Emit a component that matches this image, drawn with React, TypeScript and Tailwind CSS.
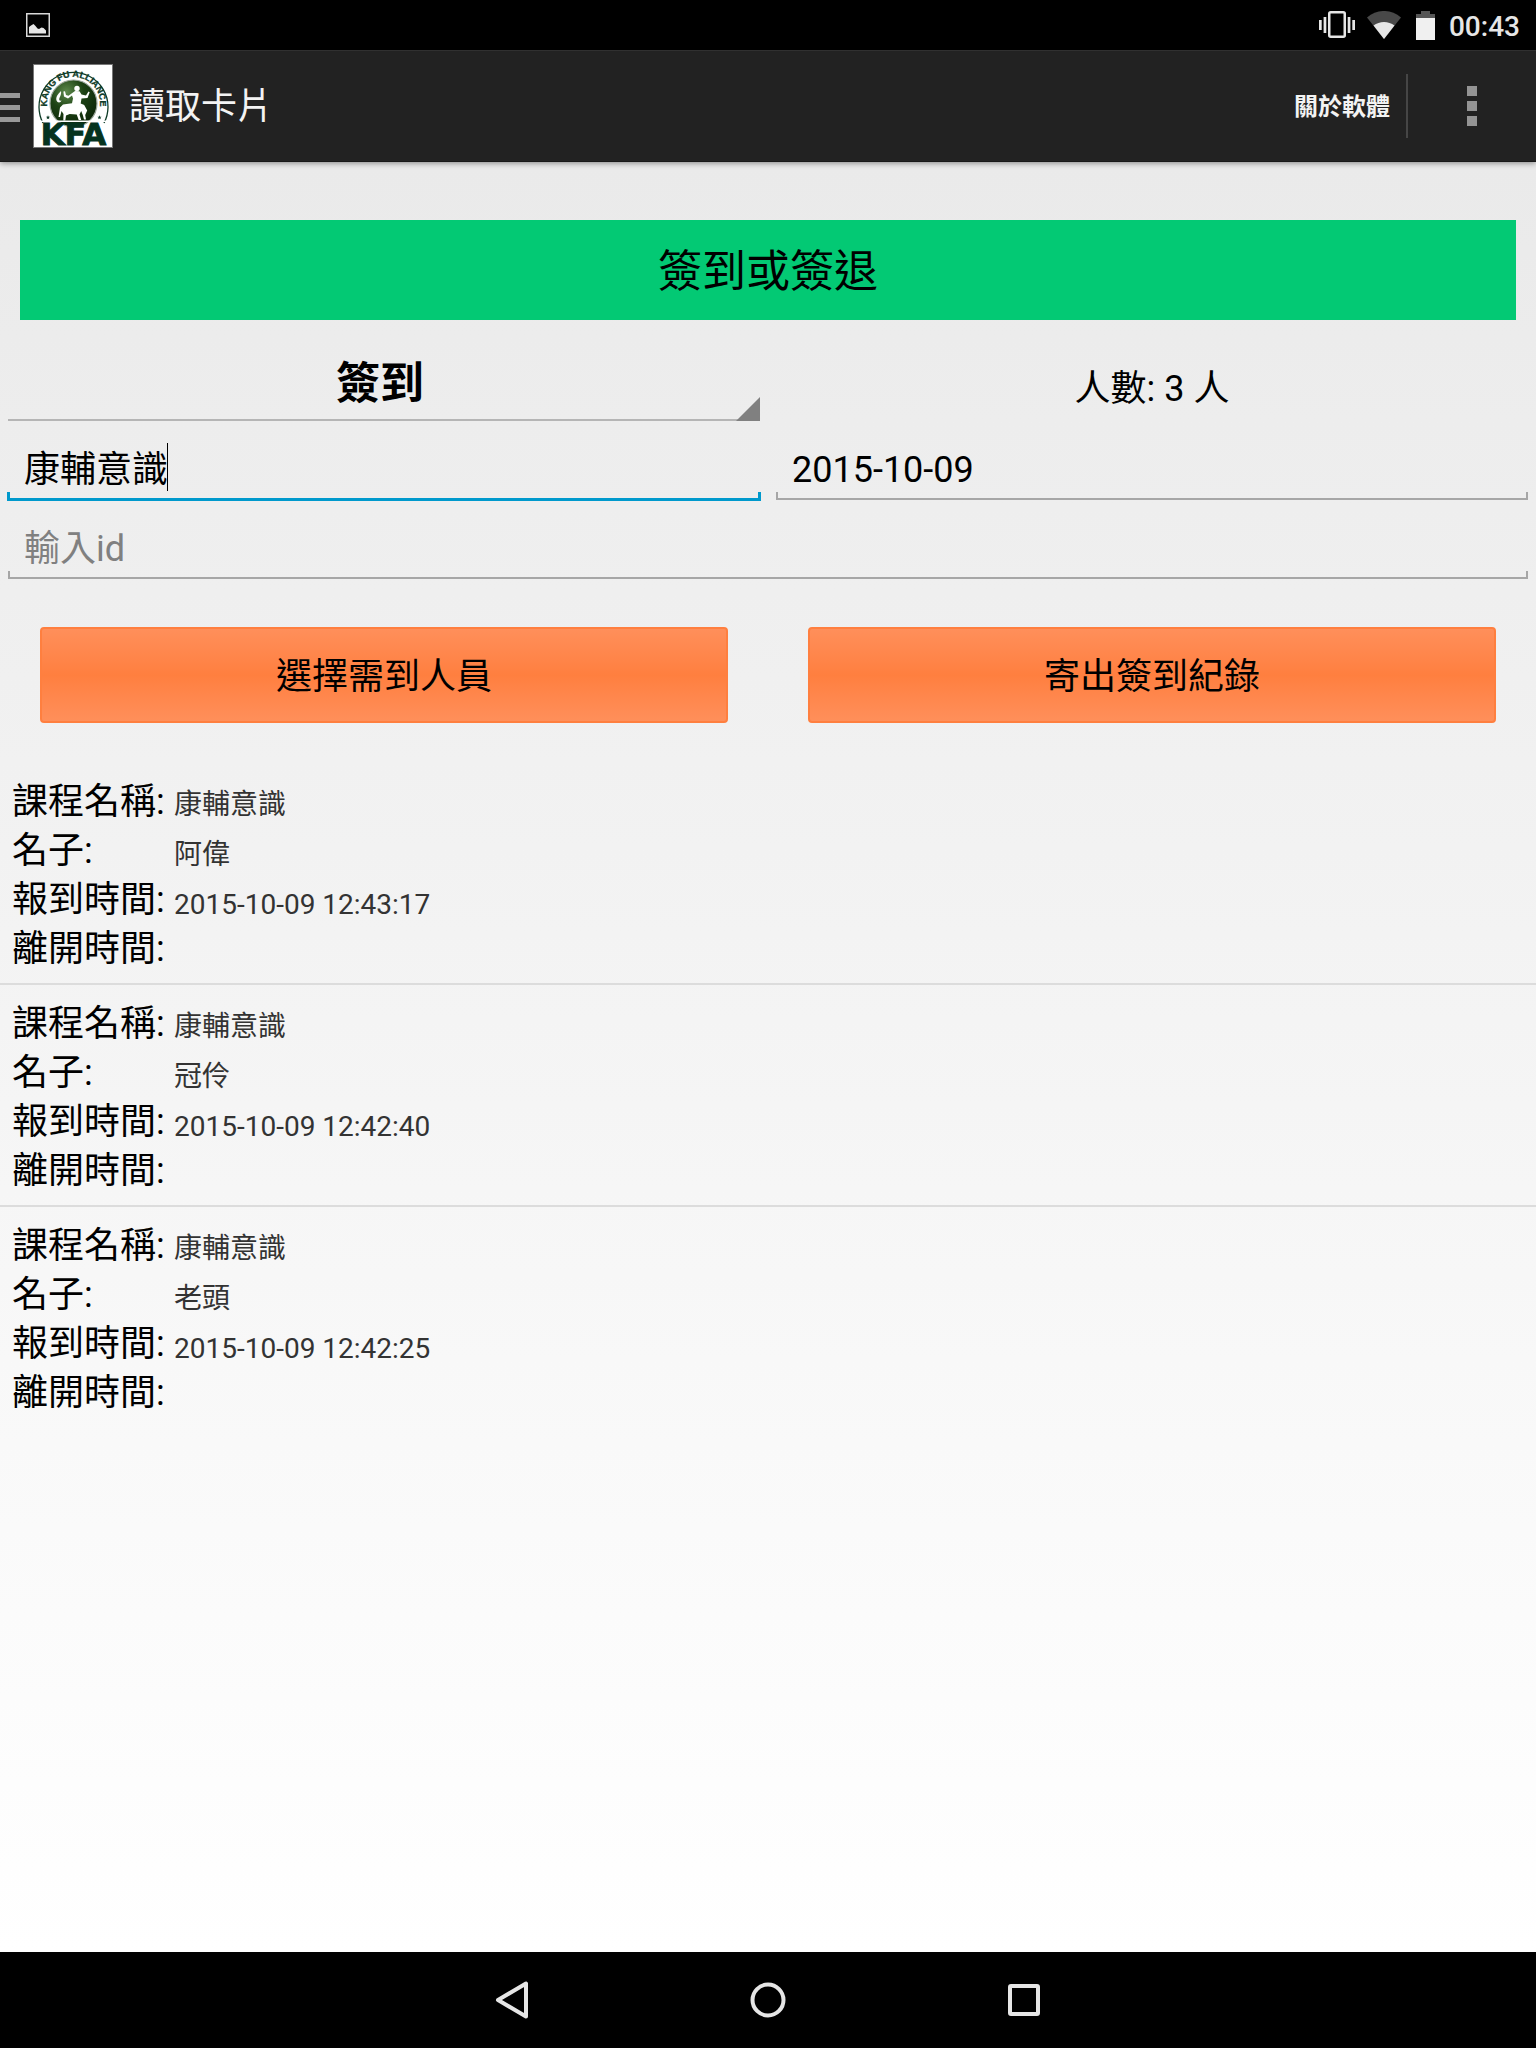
import React, { useState } from "react";

type Attendance = {
  course: string;
  name: string;
  arrived: string;
  left: string;
};

const records: Attendance[] = [
  { course: "康輔意識", name: "阿偉", arrived: "2015-10-09 12:43:17", left: "" },
  { course: "康輔意識", name: "冠伶", arrived: "2015-10-09 12:42:40", left: "" },
  { course: "康輔意識", name: "老頭", arrived: "2015-10-09 12:42:25", left: "" },
];

function StatusBar() {
  return (
    <div className="flex h-[50px] items-center justify-between bg-black pl-[26px] pr-4 text-[#e6e6e6]">
      <svg width="24" height="24" viewBox="0 0 24 24" aria-label="圖片通知">
        <rect x="0.75" y="0.75" width="22.5" height="22.5" fill="none" stroke="#d8d8d8" strokeWidth="1.5" />
        <path d="M3 20.5V14l2-1.500 2.500-1.500 2 2 2 2.500 1.500.5 2.500-1.500 2 .5 2.500 2.500v3z" fill="#e6e6e6" />
      </svg>
      <div className="flex items-center">
        <svg width="36" height="28" viewBox="0 0 36 28" aria-label="震動模式">
          <rect x="10.250" y="1.250" width="15.500" height="24.500" rx="1.500" fill="none" stroke="#e6e6e6" strokeWidth="2.500" />
          <path d="M0 9h2.700v10H0zM4.600 6h2.700v16H4.600zM28.700 6h2.700v16h-2.700zM33.300 9H36v10h-2.700z" fill="#e6e6e6" />
        </svg>
        <svg className="ml-3" width="34" height="28" viewBox="0 0 34 28" aria-label="Wi-Fi">
          <path d="M17 28 0 6.500C10-2.200 24-2.200 34 6.500z" fill="#484848" />
          <path d="M17 28 6.500 14.500c6-4.700 15-4.700 21 0z" fill="#e6e6e6" />
        </svg>
        <svg className="ml-[15px]" width="19" height="29" viewBox="0 0 19 29" aria-label="電池">
          <path d="M5 0h9v3h5v5H0V3h5z" fill="#555555" />
          <path d="M0 7h19v22H0z" fill="#f0f0f0" />
        </svg>
        <span className="ml-[14px] pt-1 text-[28px] leading-8 font-medium">00:43</span>
      </div>
    </div>
  );
}

function Logo() {
  return (
    <svg width="80" height="84" viewBox="0 0 80 84" role="img" aria-label="Kang Fu Alliance" className="overflow-visible">
      <defs>
        <radialGradient id="disc" cx="0.35" cy="0.25" r="0.8">
          <stop offset="0" stopColor="#5d8a4c" />
          <stop offset="0.450" stopColor="#1d4214" />
          <stop offset="1" stopColor="#0c2408" />
        </radialGradient>
        <path id="ring" d="M18.800 54.700A26.500 26.500 0 1 1 62.200 54.700" />
      </defs>
      <rect x="0.500" y="0.500" width="79" height="83" fill="#ffffff" stroke="#777777" strokeWidth="1" />
      <path d="M10 59A34.500 34.500 0 1 1 71 59" fill="none" stroke="#0d3a26" strokeWidth="1.300" />
      <circle cx="40.500" cy="39.500" r="23.500" fill="url(#disc)" stroke="#9aa59a" strokeWidth="1.200" />
      <text fill="#0d3a26" stroke="#0d3a26" strokeWidth="0.300" className="font-[family-name:Liberation_Sans] text-[9px] font-bold">
        <textPath href="#ring" startOffset="50%" textAnchor="middle">KANG FU ALLIANCE</textPath>
      </text>
      <path d="M15 51.300l.6 1.400 1.500.1-1.200 1 .4 1.500-1.300-.8-1.300.8.400-1.500-1.200-1 1.500-.1zM66.500 51.300l.6 1.400 1.500.1-1.200 1 .4 1.500-1.300-.8-1.300.8.4-1.500-1.200-1 1.500-.1z" fill="#0d3a26" />
      <g fill="#ffffff">
        <circle cx="44" cy="24.500" r="2.700" />
        <path d="M42 27l4.500.2 2 3.300 4.500 1 2.500-4 1.200.7-2.200 5.800-6 .5-.8 5 3.500 1.500 3 5.500-2 4.500.8 4.500h-2l-1.200-4.500-1.600-4-1.700 3.500 1.700 5.500h-2.500l-2-5.500-7-.5-3.700 1.500-.7 5h-2l.2-6.500-2-3-1.500 6h-1.500l1.500-9.500 3-3 9-1.200 1-4.800-1-3-4 3-4-2-.6-5 1.600-.3 1 3.700 2.500.8z" />
        <path d="M28 27c-3 3-5.500 6-4.500 9.500 1 2.500 4 2.500 5 0l-1.500.3c-2.500-2 2-5 1-9.800z" />
      </g>
      <rect x="4" y="56.500" width="73" height="1.500" fill="#ffffff" />
      <text
        x="40.500"
        y="80.500"
        textAnchor="middle"
        fill="#05331f"
        stroke="#05331f"
        strokeWidth="1"
        className="font-[family-name:DejaVu_Sans] text-[31px] font-bold"
      >
        KFA
      </text>
    </svg>
  );
}

function ActionBar() {
  return (
    <header className="relative z-10 flex h-28 items-center border-t border-b border-t-[#303030] border-b-[#181818] bg-[#222222] shadow-[0_1px_6px_rgba(0,0,0,0.45)]">
      <button type="button" aria-label="開啟選單" className="flex h-full items-center">
        <span className="flex w-5 flex-col gap-[7px] pt-0.5">
          <span className="h-[5px] bg-[#999999]" />
          <span className="h-[5px] bg-[#999999]" />
          <span className="h-[5px] bg-[#999999]" />
        </span>
        <span className="ml-[13px]">
          <Logo />
        </span>
      </button>
      <h1 className="ml-4 flex-1 pt-0.5 text-4xl font-normal text-[#f3f3f3]">讀取卡片</h1>
      <button type="button" className="h-full px-4 pt-0.5 text-2xl font-bold text-[#f3f3f3]">
        關於軟體
      </button>
      <span className="h-16 w-0.5 bg-[#464646]" />
      <button type="button" aria-label="更多選項" className="flex h-full w-32 flex-col items-center justify-center gap-[5px]">
        <span className="size-[10px] bg-[#949494]" />
        <span className="size-[10px] bg-[#949494]" />
        <span className="size-[10px] bg-[#949494]" />
      </button>
    </header>
  );
}

function CheckInForm() {
  const [mode, setMode] = useState("簽到");
  const [course, setCourse] = useState("康輔意識");
  const [date, setDate] = useState("2015-10-09");
  const [id, setId] = useState("");
  const field = "block h-[70px] w-full bg-transparent px-4 text-4xl leading-[44px] outline-none";
  return (
    <form>
      <div className="grid grid-cols-2">
        <div className="relative px-2 pt-4">
          <select
            aria-label="簽到或簽退"
            value={mode}
            onChange={(e) => setMode(e.target.value)}
            className="block h-[85px] w-full appearance-none border-b-2 border-[#b5b5b5] bg-transparent pt-3 pr-2 text-center text-[44px] font-bold outline-none [text-align-last:center]"
          >
            <option>簽到</option>
            <option>簽退</option>
          </select>
          <svg className="pointer-events-none absolute right-2 bottom-0" width="24" height="24" viewBox="0 0 24 24" aria-hidden="true">
            <path d="M24 0v24H0z" fill="#808080" />
          </svg>
        </div>
        <p className="flex items-center justify-center pt-9 text-4xl">人數: 3 人</p>

        <div className="relative px-2 pt-px">
          <input
            aria-label="課程名稱"
            value={course}
            onChange={(e) => setCourse(e.target.value)}
            className={field + " pt-[18px] caret-transparent"}
          />
          <span className="absolute top-[22px] left-[167px] h-12 w-px bg-black" />
          <div className="-mx-px h-[9px] border-x-3 border-b-3 border-[#0099cc]" />
        </div>
        <div className="px-2 pt-px">
          <input
            aria-label="日期"
            value={date}
            onChange={(e) => setDate(e.target.value)}
            className={field + " pt-[26px]"}
          />
          <div className="h-2 border-x-2 border-b-2 border-[#a6a6a6]" />
        </div>
      </div>
      <div className="px-2">
        <input
          aria-label="輸入id"
          placeholder="輸入id"
          value={id}
          onChange={(e) => setId(e.target.value)}
          className={field + " pt-[26px] placeholder:text-[#808080] placeholder:opacity-100"}
        />
        <div className="h-2 border-x-2 border-b-2 border-[#a6a6a6]" />
      </div>
      <div className="mt-12 grid grid-cols-2 gap-20 px-10">
        {["選擇需到人員", "寄出簽到紀錄"].map((label) => (
          <button
            key={label}
            type="button"
            className="h-24 rounded border-2 border-[#ff7f3f] bg-linear-to-b from-[#ff8f5a] via-[#ff7f3f] to-[#ff8f5a] pt-1 text-4xl"
          >
            {label}
          </button>
        ))}
      </div>
    </form>
  );
}

function RecordItem({ record }: { record: Attendance }) {
  return (
    <li className="flex border-b-2 border-[#dcdcdc] px-3 pt-[15px] pb-[9px] last:border-b-0">
      <div className="w-[162px] text-4xl">
        <p className="h-[49px] leading-[49px]">課程名稱:</p>
        <p className="h-[49px] leading-[49px]">名子:</p>
        <p className="h-[49px] leading-[49px]">報到時間:</p>
        <p className="h-[49px] leading-[49px]">離開時間:</p>
      </div>
      <div className="flex-1 pt-0.5 text-[28px] text-[#333333]">
        <p className="h-[50px] leading-[50px]">{record.course}</p>
        <p className="h-[50px] leading-[50px]">{record.name}</p>
        <p className="h-[50px] leading-[50px]">{record.arrived}</p>
        {record.left && <p className="leading-[50px]">{record.left}</p>}
      </div>
    </li>
  );
}

function NavBar() {
  const button = "flex h-24 w-64 items-center justify-center";
  return (
    <nav className="flex justify-center bg-black">
      <button type="button" aria-label="返回" className={button}>
        <svg width="36" height="40" viewBox="0 0 36 40" fill="none" stroke="#e6e6e6" strokeWidth="4" strokeLinejoin="round">
          <path d="M32 3.500v33L4 20z" />
        </svg>
      </button>
      <button type="button" aria-label="首頁" className={button}>
        <svg width="36" height="36" viewBox="0 0 36 36" fill="none" stroke="#e6e6e6" strokeWidth="4">
          <circle cx="18" cy="18" r="15.500" />
        </svg>
      </button>
      <button type="button" aria-label="最近使用" className={button}>
        <svg width="32" height="32" viewBox="0 0 32 32" fill="none" stroke="#e6e6e6" strokeWidth="4">
          <rect x="2" y="2" width="28" height="28" rx="1" />
        </svg>
      </button>
    </nav>
  );
}

export default function App() {
  return (
    <div
      lang="zh-TW"
      className="flex min-h-screen flex-col bg-white font-[Roboto,'Noto_Sans_CJK_TC',sans-serif] text-black"
    >
      <StatusBar />
      <ActionBar />
      <main className="flex-1 bg-linear-to-b from-[#eaeaea] to-white pt-[58px]">
        <h2 className="mx-5 flex h-[100px] items-center justify-center bg-[#03c974] pt-1 text-[44px] font-normal">
          簽到或簽退
        </h2>
        <CheckInForm />
        <ul className="mt-10">
          {records.map((record) => (
            <RecordItem key={record.arrived} record={record} />
          ))}
        </ul>
      </main>
      <NavBar />
    </div>
  );
}
